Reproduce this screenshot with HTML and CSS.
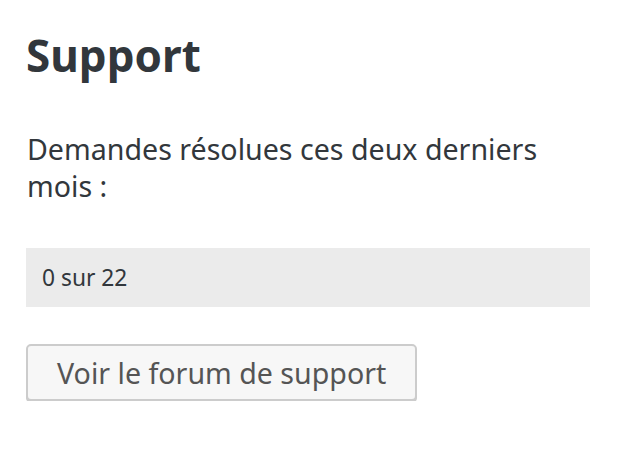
FILE: index.html
```html
<!DOCTYPE html>
<html lang="fr">
<head>
    <meta charset="UTF-8">
    <meta name="viewport" content="width=device-width, initial-scale=1.0">
    <title>Support</title>
    <link rel="stylesheet" href="styles.css">
</head>
<body>
    <div class="supportBox">
        <h2 class="title">Support</h2>
        <p class="intro">Demandes résolues ces deux derniers mois :</p>
        <div class="count">0 sur 22</div>
        <a class="button" href="#">Voir le forum de support</a>
    </div>
</body>
</html>
```
FILE: styles.css
```css
*{
    margin: 0px;
    padding: 0px;
    box-sizing: border-box;
}
body{
    background: #fff;
    font-family: "Noto Sans", "Open Sans", sans-serif;
    color: #32373c;
}
.supportBox{
    width: 630px;
    padding: 20px 40px 0px 26px;
}
.title{
    font-size: 44px;
    font-weight: 700;
    line-height: 70px;
    color: #32373c;
}
.intro{
    margin-top: 40px;
    font-size: 28.6px;
    line-height: 37px;
    padding-left: 1px;
}
.count{
    margin-top: 44px;
    height: 59px;
    width: 564px;
    background: #ebebeb;
    font-size: 22.8px;
    line-height: 59px;
    padding-left: 16px;
}
.button{
    display: inline-block;
    margin-top: 37px;
    height: 57px;
    padding: 0px 29px;
    border: 2px solid #ccc;
    border-radius: 5px;
    background: #f7f7f7;
    box-shadow: 0px 2px 0px #ccc;
    color: #555;
    font-size: 28.6px;
    line-height: 53px;
    text-decoration: none;
}
```
